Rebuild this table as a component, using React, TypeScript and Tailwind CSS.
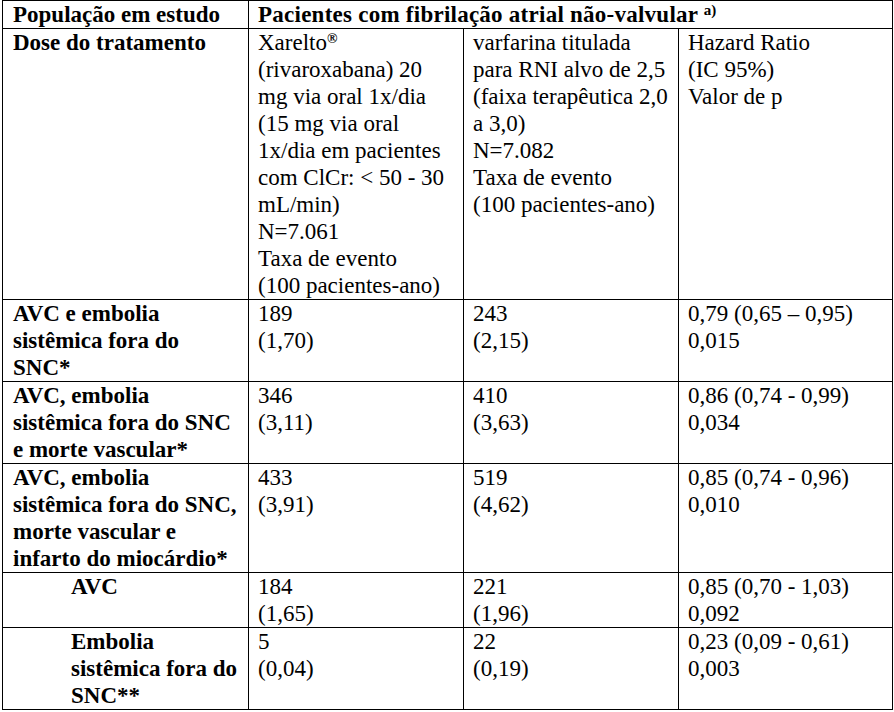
const serif = "font-[family-name:Liberation_Serif,Times_New_Roman,serif]";

type Row = {
  label: string[];
  indent?: boolean;
  cells: string[][];
};

const rows: Row[] = [
  {
    label: ["AVC e embolia", "sistêmica fora do", "SNC*"],
    cells: [["189", "(1,70)"], ["243", "(2,15)"], ["0,79 (0,65 – 0,95)", "0,015"]],
  },
  {
    label: ["AVC, embolia", "sistêmica fora do SNC", "e morte vascular*"],
    cells: [["346", "(3,11)"], ["410", "(3,63)"], ["0,86 (0,74 - 0,99)", "0,034"]],
  },
  {
    label: ["AVC, embolia", "sistêmica fora do SNC,", "morte vascular e", "infarto do miocárdio*"],
    cells: [["433", "(3,91)"], ["519", "(4,62)"], ["0,85 (0,74 - 0,96)", "0,010"]],
  },
  {
    label: ["AVC"],
    indent: true,
    cells: [["184", "(1,65)"], ["221", "(1,96)"], ["0,85 (0,70 - 1,03)", "0,092"]],
  },
  {
    label: ["Embolia", "sistêmica fora do", "SNC**"],
    indent: true,
    cells: [["5", "(0,04)"], ["22", "(0,19)"], ["0,23 (0,09 - 0,61)", "0,003"]],
  },
];

function Lines({ lines }: { lines: string[] }) {
  return (
    <>
      {lines.map((l, i) => (
        <div key={i} className="whitespace-nowrap">
          {l}
        </div>
      ))}
    </>
  );
}

export default function App() {
  const cell = "border-r border-b border-black pl-[9px]";

  return (
    <div className={`min-h-screen bg-white text-black ${serif} text-[23px] leading-[27px]`}>
      <div className="ml-[2px] w-[891px] grid grid-cols-[246px_215px_215px_214px] border-l border-t border-black">
        {/* header */}
        <div className={`${cell} pl-[10px] font-bold`}>População em estudo</div>
        <div className={`${cell} col-span-3 font-bold tracking-[0.25px]`}>
          Pacientes com fibrilação atrial não-valvular{" "}
          <sup className="text-[15px] font-bold tracking-normal">a)</sup>
        </div>

        <div className={`${cell} pl-[10px] font-bold`}>Dose do tratamento</div>
        <div className={cell}>
          <div>
            Xarelto<sup className="text-[14px] font-bold">®</sup>
          </div>
          <Lines
            lines={[
              "(rivaroxabana) 20",
              "mg via oral 1x/dia",
              "(15 mg via oral",
              "1x/dia em pacientes",
              "com ClCr: < 50 - 30",
              "mL/min)",
              "N=7.061",
              "Taxa de evento",
              "(100 pacientes-ano)",
            ]}
          />
        </div>
        <div className={cell}>
          <Lines
            lines={[
              "varfarina titulada",
              "para RNI alvo de 2,5",
              "(faixa terapêutica 2,0",
              "a 3,0)",
              "N=7.082",
              "Taxa de evento",
              "(100 pacientes-ano)",
            ]}
          />
        </div>
        <div className={cell}>
          <Lines lines={["Hazard Ratio", "(IC 95%)", "Valor de p"]} />
        </div>

        {rows.map((r, i) => (
          <div key={i} className="contents">
            <div className={`${cell} font-bold ${r.indent ? "pl-[68px]" : "pl-[10px]"}`}>
              <Lines lines={r.label} />
            </div>
            {r.cells.map((c, j) => (
              <div key={j} className={cell}>
                <Lines lines={c} />
              </div>
            ))}
          </div>
        ))}
      </div>
    </div>
  );
}
